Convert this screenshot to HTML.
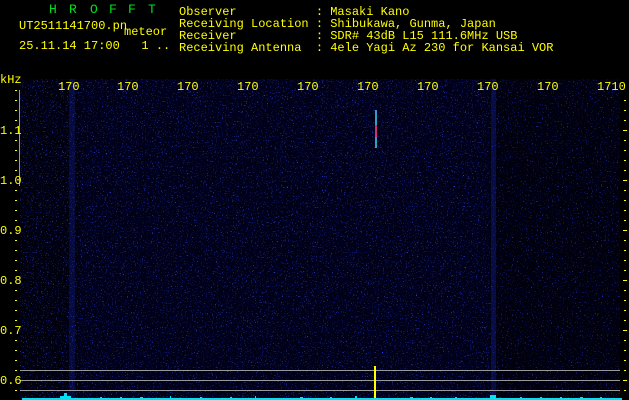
<!DOCTYPE html>
<html><head><meta charset="utf-8"><style>
html,body{margin:0;padding:0;background:#000;}
body{width:629px;height:400px;position:relative;overflow:hidden;font-family:"Liberation Mono",monospace;}
.t{position:absolute;color:#ffff00;font-size:12px;line-height:12px;white-space:pre;}
.g{position:absolute;color:#00e020;font-size:13px;top:2px;}
</style></head><body>
<svg width="629" height="400" style="position:absolute;left:0;top:0">
<defs>
<filter id="n" x="0" y="0" width="100%" height="100%">
<feTurbulence type="fractalNoise" baseFrequency="0.8" numOctaves="1" seed="4"/>
<feColorMatrix type="matrix" values="0 0 0 0 0.02  0 0 0 0 0.04  0 0 0 0 0.7  10 0 0 0 -6.5"/>
</filter>
<filter id="n2" x="0" y="0" width="100%" height="100%">
<feTurbulence type="fractalNoise" baseFrequency="0.9" numOctaves="1" seed="9"/>
<feColorMatrix type="matrix" values="0 0 0 0 0.05  0 0 0 0 0.1  0 0 0 0 1  0 12 0 0 -8.3"/>
</filter>
</defs>
<rect x="20" y="79" width="600" height="321" fill="#00000e"/>
<rect x="80" y="79" width="410" height="321" fill="#000018"/>
<rect x="20" y="79" width="600" height="321" filter="url(#n)"/>
<rect x="20" y="79" width="470" height="321" filter="url(#n2)"/>
<rect x="69" y="79" width="6" height="321" fill="#1828c0" opacity="0.25"/>
<rect x="491" y="79" width="5" height="321" fill="#1828c0" opacity="0.3"/>
<rect x="375" y="110" width="2" height="38" fill="#30a0c0"/>
<rect x="375" y="125" width="2" height="12" fill="#d03070"/>
<line x1="19.5" y1="90" x2="19.5" y2="186" stroke="#999"/>
<g stroke="#999" stroke-width="1">
<line x1="20" y1="370.5" x2="620" y2="370.5"/>
<line x1="20" y1="380.5" x2="620" y2="380.5"/>
<line x1="20" y1="390.5" x2="620" y2="390.5"/>
</g>
<rect x="374" y="366" width="2" height="34" fill="#ffff00"/>
<path d="M22 400v-2h600v2zM60 400v-4h4v-3h3v3h4v4zM490 400v-5h6v5zM100 400v-3h2v3zM140 400v-3h3v3zM200 400v-3h2v3zM255 400v-4h1v4zM300 400v-3h3v3zM355 400v-4h2v4zM410 400v-3h3v3zM455 400v-3h2v3zM540 400v-3h2v3zM580 400v-3h3v3zM120 400v-3h2v3zM170 400v-4h1v4zM230 400v-3h2v3zM330 400v-3h2v3zM430 400v-3h2v3zM520 400v-3h2v3zM560 400v-3h2v3zM600 400v-3h2v3z" fill="#00e0f0"/>
<g fill="#ffff00">
<rect x="15" y="90" width="2" height="1"/><rect x="15" y="100" width="2" height="1"/><rect x="15" y="110" width="2" height="1"/><rect x="15" y="120" width="2" height="1"/><rect x="15" y="140" width="2" height="1"/><rect x="15" y="150" width="2" height="1"/><rect x="15" y="160" width="2" height="1"/><rect x="15" y="170" width="2" height="1"/><rect x="15" y="190" width="2" height="1"/><rect x="15" y="200" width="2" height="1"/><rect x="15" y="210" width="2" height="1"/><rect x="15" y="220" width="2" height="1"/><rect x="15" y="240" width="2" height="1"/><rect x="15" y="250" width="2" height="1"/><rect x="15" y="260" width="2" height="1"/><rect x="15" y="270" width="2" height="1"/><rect x="15" y="290" width="2" height="1"/><rect x="15" y="300" width="2" height="1"/><rect x="15" y="310" width="2" height="1"/><rect x="15" y="320" width="2" height="1"/><rect x="15" y="340" width="2" height="1"/><rect x="15" y="350" width="2" height="1"/><rect x="15" y="360" width="2" height="1"/><rect x="15" y="370" width="2" height="1"/><rect x="15" y="390" width="2" height="1"/>
<rect x="624" y="100" width="2" height="1"/><rect x="624" y="110" width="2" height="1"/><rect x="624" y="120" width="2" height="1"/><rect x="623" y="130" width="4" height="1"/><rect x="624" y="140" width="2" height="1"/><rect x="624" y="150" width="2" height="1"/><rect x="624" y="160" width="2" height="1"/><rect x="624" y="170" width="2" height="1"/><rect x="623" y="180" width="4" height="1"/><rect x="624" y="190" width="2" height="1"/><rect x="624" y="200" width="2" height="1"/><rect x="624" y="210" width="2" height="1"/><rect x="624" y="220" width="2" height="1"/><rect x="623" y="230" width="4" height="1"/><rect x="624" y="240" width="2" height="1"/><rect x="624" y="250" width="2" height="1"/><rect x="624" y="260" width="2" height="1"/><rect x="624" y="270" width="2" height="1"/><rect x="623" y="280" width="4" height="1"/><rect x="624" y="290" width="2" height="1"/><rect x="624" y="300" width="2" height="1"/><rect x="624" y="310" width="2" height="1"/><rect x="624" y="320" width="2" height="1"/><rect x="623" y="330" width="4" height="1"/><rect x="624" y="340" width="2" height="1"/><rect x="624" y="350" width="2" height="1"/><rect x="624" y="360" width="2" height="1"/><rect x="624" y="370" width="2" height="1"/><rect x="623" y="380" width="4" height="1"/><rect x="624" y="390" width="2" height="1"/>
</g>
</svg>
<div class="g" style="left:49px">H</div><div class="g" style="left:69px">R</div><div class="g" style="left:90px">O</div><div class="g" style="left:109px">F</div><div class="g" style="left:128px">F</div><div class="g" style="left:148px">T</div>
<div class="t" style="left:19px;top:20px">UT2511141700.pn</div>
<div class="t" style="left:124px;top:26px">meteor</div>
<div class="t" style="left:19px;top:40px">25.11.14 17:00   1 ..</div>
<div class="t" style="left:179px;top:6px">Observer           : Masaki Kano
Receiving Location : Shibukawa, Gunma, Japan
Receiver           : SDR# 43dB L15 111.6MHz USB
Receiving Antenna  : 4ele Yagi Az 230 for Kansai VOR</div>
<div class="t" style="left:0;top:74px">kHz</div>
<div class="t" style="left:58px;top:81px">170</div>
<div class="t" style="left:117px;top:81px">170</div>
<div class="t" style="left:177px;top:81px">170</div>
<div class="t" style="left:237px;top:81px">170</div>
<div class="t" style="left:297px;top:81px">170</div>
<div class="t" style="left:357px;top:81px">170</div>
<div class="t" style="left:417px;top:81px">170</div>
<div class="t" style="left:477px;top:81px">170</div>
<div class="t" style="left:537px;top:81px">170</div>
<div class="t" style="left:597px;top:81px">1710</div>
<div class="t" style="left:0;top:125px">1.1</div>
<div class="t" style="left:0;top:175px">1.0</div>
<div class="t" style="left:0;top:225px">0.9</div>
<div class="t" style="left:0;top:275px">0.8</div>
<div class="t" style="left:0;top:325px">0.7</div>
<div class="t" style="left:0;top:375px">0.6</div>
</body></html>
